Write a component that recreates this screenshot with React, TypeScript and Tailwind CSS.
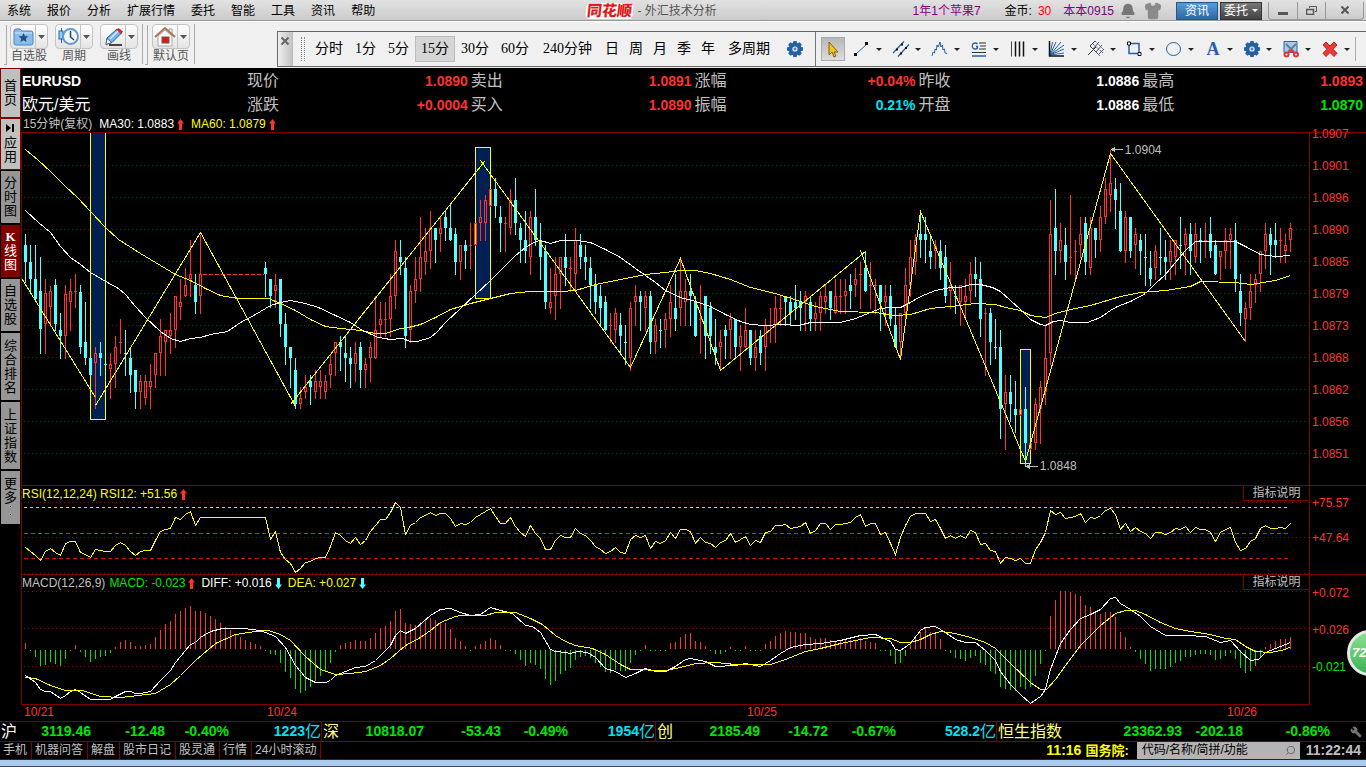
import React from "react";
import { Bell, Shirt, Wrench, Search } from "lucide-react";

type Candle = [kind: "r" | "c", high: number, top: number, bottom: number, low: number];

const STEP = 5;

const FIRST_SESSION: Candle[] = [
  ["c", 234, 245, 262, 282], ["c", 245, 262, 279, 292], ["c", 245, 279, 299, 300], ["c", 257, 291, 329, 353],
  ["r", 279, 293, 324, 353], ["r", 286, 291, 307, 324], ["c", 279, 285, 324, 330], ["c", 313, 330, 336, 358],
  ["r", 285, 294, 336, 358], ["r", 279, 291, 302, 330], ["r", 274, 291, 291, 307], ["c", 285, 292, 347, 353],
  ["c", 302, 342, 358, 364], ["c", 358, 358, 375, 375], ["r", 347, 353, 363, 408], ["c", 342, 353, 358, 375],
  ["c", 364, 364, 364, 364], ["r", 353, 364, 369, 398], ["r", 336, 347, 364, 387], ["r", 319, 342, 342, 353],
  ["c", 330, 353, 353, 375], ["c", 347, 358, 375, 392], ["c", 370, 370, 392, 408], ["r", 375, 381, 392, 408],
  ["r", 375, 381, 398, 404], ["r", 364, 381, 387, 408], ["r", 353, 353, 375, 387], ["r", 319, 336, 353, 375],
  ["r", 330, 330, 342, 375], ["r", 313, 330, 336, 353], ["r", 296, 296, 330, 347], ["r", 279, 302, 307, 319],
  ["r", 268, 285, 296, 296], ["r", 240, 274, 279, 296], ["c", 274, 285, 302, 313], ["r", 235, 274, 296, 313],
];

const SECOND_SESSION: Candle[] = [
  ["c", 262, 268, 274, 296], ["c", 279, 279, 296, 307], ["r", 274, 285, 291, 307], ["c", 279, 279, 324, 336],
  ["c", 313, 324, 347, 364], ["c", 347, 347, 358, 387], ["c", 358, 370, 404, 408], ["r", 387, 398, 404, 408],
  ["r", 375, 387, 392, 398], ["c", 375, 381, 387, 404], ["r", 370, 381, 392, 398], ["r", 370, 381, 387, 398],
  ["r", 375, 381, 392, 398], ["r", 354, 364, 375, 387], ["r", 342, 342, 353, 375], ["c", 336, 342, 347, 370],
  ["c", 336, 353, 358, 381], ["c", 347, 358, 364, 387], ["r", 342, 353, 364, 381], ["c", 342, 347, 370, 387],
  ["r", 358, 364, 370, 387], ["r", 342, 347, 358, 381], ["r", 296, 330, 358, 358], ["r", 302, 319, 325, 336],
  ["r", 302, 319, 319, 336], ["r", 274, 296, 319, 336], ["r", 240, 251, 296, 308], ["c", 240, 257, 262, 274],
  ["c", 257, 268, 336, 347], ["r", 285, 291, 330, 342], ["r", 257, 279, 291, 302], ["r", 217, 257, 279, 291],
  ["r", 228, 251, 262, 274], ["r", 211, 228, 251, 268], ["c", 228, 228, 240, 262], ["r", 217, 228, 234, 251],
  ["c", 211, 217, 228, 240], ["c", 205, 228, 240, 240], ["c", 228, 234, 262, 274], ["r", 245, 245, 262, 279],
  ["c", 240, 245, 251, 268], ["r", 223, 245, 245, 268], ["r", 223, 223, 245, 245], ["r", 200, 217, 223, 240],
  ["r", 195, 200, 223, 240], ["r", 189, 189, 206, 206], ["c", 178, 189, 206, 217], ["c", 206, 217, 223, 251],
  ["r", 217, 223, 223, 251], ["r", 189, 200, 228, 234], ["c", 178, 200, 223, 234], ["c", 223, 228, 240, 262],
  ["c", 211, 240, 251, 262], ["r", 211, 217, 257, 274], ["c", 189, 217, 240, 245], ["c", 223, 240, 257, 279],
  ["c", 245, 251, 302, 308], ["r", 268, 302, 308, 313], ["r", 257, 274, 296, 319], ["r", 257, 257, 274, 308],
  ["c", 234, 257, 268, 285], ["r", 257, 268, 268, 291], ["r", 228, 240, 274, 291], ["c", 234, 245, 257, 268],
  ["c", 245, 257, 262, 279], ["c", 257, 268, 285, 308], ["c", 274, 285, 302, 313], ["c", 285, 296, 308, 325],
  ["c", 296, 302, 330, 330], ["r", 313, 325, 325, 342], ["r", 308, 313, 330, 342], ["c", 313, 325, 336, 353],
  ["c", 325, 342, 342, 364], ["r", 302, 308, 358, 370], ["r", 285, 296, 302, 325], ["c", 291, 296, 302, 330],
  ["r", 291, 296, 308, 330], ["c", 291, 296, 342, 353], ["r", 319, 325, 342, 353], ["c", 319, 330, 330, 347],
  ["r", 313, 319, 330, 347], ["r", 285, 302, 319, 336], ["c", 274, 308, 319, 330], ["r", 258, 291, 308, 325],
  ["r", 279, 291, 302, 325], ["c", 274, 291, 296, 325], ["c", 296, 302, 336, 336], ["r", 285, 319, 319, 353],
  ["c", 296, 296, 336, 358], ["c", 302, 308, 336, 353], ["c", 319, 347, 353, 364], ["r", 330, 342, 347, 370],
  ["c", 325, 330, 336, 358], ["r", 313, 319, 330, 358], ["c", 319, 319, 347, 358], ["r", 325, 336, 347, 370],
  ["r", 308, 330, 347, 347], ["c", 330, 330, 358, 364], ["r", 330, 347, 358, 370], ["c", 330, 336, 353, 364],
  ["r", 319, 325, 347, 370], ["r", 308, 325, 325, 342], ["r", 296, 308, 325, 342], ["r", 296, 308, 308, 325],
  ["c", 296, 296, 302, 325], ["c", 296, 302, 313, 325], ["c", 285, 302, 308, 319], ["c", 291, 302, 308, 330],
  ["r", 291, 296, 302, 330], ["c", 296, 302, 319, 330], ["r", 302, 313, 319, 330], ["r", 291, 296, 313, 330],
  ["r", 285, 296, 302, 313], ["c", 291, 291, 308, 319], ["r", 279, 296, 313, 313], ["r", 279, 296, 296, 313],
  ["r", 279, 291, 296, 313], ["c", 274, 285, 291, 308], ["r", 268, 279, 285, 296], ["r", 262, 274, 274, 308],
  ["c", 251, 268, 291, 291], ["r", 262, 285, 285, 308], ["r", 279, 285, 285, 313], ["c", 285, 285, 302, 330],
  ["r", 285, 296, 302, 325], ["c", 285, 296, 319, 325], ["c", 308, 325, 347, 347], ["r", 313, 313, 342, 358],
  ["r", 268, 285, 313, 325], ["r", 240, 257, 285, 296], ["r", 234, 240, 262, 274], ["c", 212, 234, 240, 257],
  ["c", 217, 234, 240, 262], ["c", 235, 251, 257, 268], ["r", 240, 246, 251, 268], ["c", 240, 251, 268, 279],
  ["c", 245, 257, 296, 302], ["r", 262, 285, 291, 308], ["c", 285, 296, 296, 313], ["r", 285, 285, 302, 325],
  ["r", 279, 296, 302, 319], ["r", 262, 274, 291, 302], ["c", 257, 274, 279, 296], ["c", 262, 279, 319, 336],
  ["r", 308, 313, 313, 375], ["c", 308, 313, 342, 364], ["c", 319, 347, 347, 358], ["c", 330, 347, 409, 438],
  ["r", 375, 392, 404, 449], ["c", 375, 392, 404, 421], ["c", 381, 409, 415, 432], ["r", 409, 409, 415, 415],
  ["c", 387, 409, 443, 466], ["r", 443, 443, 449, 449], ["r", 398, 404, 443, 449], ["r", 381, 387, 409, 443],
  ["r", 325, 358, 392, 404], ["r", 200, 234, 353, 364], ["c", 189, 228, 251, 274], ["r", 223, 240, 251, 262],
  ["c", 228, 245, 262, 279], ["r", 195, 257, 257, 274], ["r", 240, 251, 251, 279], ["r", 217, 234, 245, 257],
  ["c", 217, 223, 262, 274], ["r", 217, 228, 268, 274], ["c", 228, 228, 240, 257], ["r", 206, 217, 240, 251],
  ["r", 178, 189, 217, 223], ["r", 150, 183, 195, 211], ["c", 178, 189, 200, 228], ["c", 183, 211, 251, 251],
  ["r", 211, 217, 251, 262], ["c", 217, 217, 251, 257], ["r", 228, 234, 245, 268], ["c", 234, 240, 251, 274],
  ["c", 234, 257, 257, 285], ["c", 251, 268, 279, 285], ["r", 245, 251, 268, 279], ["c", 228, 257, 257, 274],
  ["c", 240, 257, 262, 279], ["r", 240, 251, 262, 279], ["r", 240, 240, 257, 274], ["c", 217, 245, 245, 268],
  ["r", 228, 234, 245, 274], ["c", 223, 234, 251, 274], ["r", 223, 234, 257, 262], ["c", 228, 240, 240, 262],
  ["r", 223, 240, 240, 257], ["c", 217, 234, 251, 257], ["c", 240, 245, 274, 274], ["r", 251, 251, 257, 279],
  ["r", 228, 240, 251, 268], ["r", 228, 234, 240, 268], ["c", 223, 240, 279, 291], ["c", 274, 291, 313, 325],
  ["r", 302, 308, 319, 341], ["r", 274, 291, 308, 319], ["r", 274, 279, 285, 302], ["r", 251, 251, 274, 291],
  ["r", 223, 234, 251, 268], ["c", 228, 234, 245, 274], ["c", 223, 240, 245, 257], ["r", 228, 240, 240, 262],
  ["r", 234, 245, 251, 262], ["r", 223, 228, 240, 251],
];

const MA60 =
  "25,149 38,160 50,171 65,186 77,197 90,211 105,227 118,239 140,253 160,265 175,274 190,280 205,288 220,295 237,298 268,298 280,303 295,310 310,319 325,326 340,328 360,330 375,333 385,333 400,328 408,327 420,324 435,317 450,309 470,303 490,298 510,293 530,291 545,291 560,291 575,290 595,284 620,279 645,274 665,272 680,270 695,270 710,273 730,279 750,287 775,293 800,301 815,306 840,311 875,312 895,315 910,314 930,308 950,306 975,303 995,304 1005,307 1020,310 1030,315 1045,317 1055,313 1070,309 1090,305 1110,299 1120,296 1140,292 1165,290 1190,286 1200,281 1235,282 1250,284 1275,280 1290,275";
const MA30 =
  "25,210 38,222 50,232 60,246 70,257 80,264 90,272 107,282 118,288 125,294 135,306 145,317 160,331 170,338 180,341 190,338 200,337 210,334 227,331 240,322 255,314 270,305 280,302 290,300 305,303 318,307 335,315 350,322 362,330 378,337 390,339 402,338 410,341 417,341 430,337 437,331 445,322 460,308 475,294 490,280 505,265 515,255 525,247 535,241 540,240 550,243 560,240 577,240 590,242 605,249 620,257 635,268 645,275 655,282 665,290 680,297 695,301 710,306 725,314 740,321 750,324 765,325 780,324 798,325 810,322 840,322 855,318 865,314 880,308 890,307 900,307 910,302 920,296 935,290 950,287 960,287 970,284 980,284 992,287 1000,291 1010,300 1020,309 1030,319 1040,324 1045,325 1053,321 1060,320 1070,322 1087,322 1100,317 1110,310 1117,306 1130,301 1145,293 1155,283 1165,274 1175,262 1185,250 1195,241 1235,241 1245,246 1260,254 1275,256 1290,255";
const ZIGZAG = [
  "20,276 95,397",
  "95,405 200,232 295,406",
  "290,404 484,161",
  "480,160 630,367 680,258 720,370 865,251",
  "860,250 900,359 920,211 1025,461 1110,153 1245,341",
];

const RSI_A = [547, 551, 555, 560, 551, 548, 552, 555, 543, 541, 541, 552, 554, 557, 549, 550, 551, 551, 545, 542, 545, 551, 555, 551, 550, 550, 540, 531, 529, 528, 517, 519, 514, 511, 525, 517];
const RSI_B = [
  517, 539, 531, 552, 559, 563, 572, 568, 562, 561, 558, 557, 557, 546, 532, 535, 540, 543, 537, 544, 540, 531, 525, 519, 519, 512, 502, 507, 534, 525, 522, 517, 515, 512, 515, 513, 513, 518, 526, 523,
  524, 522, 517, 514, 511, 508, 516, 523, 523, 517, 526, 532, 536, 525, 533, 538, 549, 549, 540, 535, 537, 537, 528, 533, 535, 540, 546, 549, 553, 551, 547, 552, 553, 539, 535, 537, 535, 548, 541, 543,
  540, 532, 538, 529, 529, 531, 543, 537, 542, 543, 547, 542, 540, 533, 542, 539, 536, 545, 540, 542, 532, 531, 525, 525, 524, 528, 527, 526, 522, 533, 530, 523, 523, 529, 524, 524, 523, 522, 517, 514,
  526, 523, 523, 534, 532, 543, 554, 537, 525, 516, 513, 513, 513, 521, 519, 528, 538, 535, 538, 535, 538, 530, 532, 544, 543, 550, 551, 563, 557, 558, 560, 558, 563, 563, 549, 542, 532, 510, 514, 512,
  518, 517, 516, 513, 522, 517, 518, 515, 510, 508, 514, 529, 523, 531, 527, 531, 533, 538, 532, 532, 534, 532, 528, 529, 526, 532, 527, 529, 529, 532, 541, 532, 529, 527, 542, 550, 548, 541, 538, 528,
  525, 528, 528, 527, 528, 523,
];
const RSI = RSI_A.map((y, i) => `${25 + i * STEP},${y}`)
  .concat(RSI_B.map((y, i) => `${265 + i * STEP},${y}`))
  .join(" ");

const MACD_BARS = [
  643, 651, 657, 666, 665, 662, 664, 666, 659, 651, 645, 652, 657, 662, 659, 657, 656, 653, 647, 642, 640, 642, 646, 646, 645, 644, 637, 630, 624, 621, 614, 611, 608, 606, 611, 611, 613, 616, 619, 623,
  627, 630, 634, 637, 640, 642, 644, 646, 651, 654, 655, 663, 672, 678, 689, 693, 691, 687, 681, 676, 671, 663, 652, 645, 643, 642, 640, 641, 641, 638, 633, 628, 626, 621, 611, 609, 623, 624, 625, 622,
  620, 618, 620, 622, 623, 629, 638, 641, 646, 651, 646, 644, 641, 638, 640, 645, 651, 651, 654, 660, 666, 663, 665, 669, 679, 685, 681, 674, 671, 668, 660, 657, 656, 658, 663, 667, 672, 673, 670, 671,
  671, 663, 655, 651, 645, 651, 651, 651, 651, 643, 642, 637, 634, 633, 641, 642, 646, 651, 654, 654, 652, 647, 651, 651, 646, 651, 651, 651, 644, 641, 636, 633, 631, 632, 632, 633, 633, 637, 639, 638,
  638, 640, 641, 640, 640, 640, 641, 638, 641, 642, 643, 651, 651, 656, 664, 663, 656, 645, 638, 632, 628, 632, 634, 639, 651, 653, 658, 659, 661, 658, 656, 663, 665, 671, 674, 687, 689, 690, 691, 687,
  689, 687, 676, 664, 651, 616, 600, 591, 591, 592, 594, 596, 605, 607, 613, 614, 612, 612, 617, 632, 637, 647, 652, 659, 664, 671, 669, 669, 669, 667, 663, 661, 657, 657, 655, 654, 654, 655, 660, 659,
  656, 653, 659, 668, 673, 671, 666, 658, 647, 644, 641, 639, 639, 637,
];
const DIFF =
  "25,675 35,682 40,689 45,691 50,691 60,698 65,695 70,691 75,689 80,692 90,699 110,699 115,696 125,691 130,691 135,693 140,693 150,691 160,680 170,670 175,662 190,644 195,642 200,637 210,631 222,628 243,628 260,630 275,636 285,647 295,665 305,677 315,682 325,682 330,680 335,675 345,671 355,667 365,666 375,660 390,645 395,635 400,630 405,633 415,628 430,615 440,609 450,608 455,610 460,612 470,615 480,614 490,607 500,610 512,613 525,625 532,626 540,632 550,649 555,651 565,652 570,653 577,651 587,652 595,657 605,668 615,671 625,677 635,673 645,668 655,671 665,671 675,666 685,659 690,658 705,661 715,666 735,665 745,663 760,666 770,660 780,653 790,647 805,644 820,643 840,640 860,635 875,634 890,641 895,649 900,650 910,643 920,630 925,627 935,626 945,632 955,639 965,642 975,642 985,650 995,660 1000,671 1010,684 1020,694 1030,703 1040,696 1045,689 1050,669 1060,643 1070,629 1080,618 1090,614 1100,609 1110,598 1115,597 1120,603 1130,609 1140,616 1150,626 1165,635 1185,635 1205,636 1220,642 1230,640 1240,651 1250,660 1258,659 1265,652 1275,648 1290,642";
const DEA =
  "25,677 35,678 50,685 65,690 82,690 100,696 120,697 155,693 170,684 180,675 195,660 215,643 235,634 255,631 268,630 280,634 290,640 305,656 320,669 335,674 350,673 365,671 380,665 390,658 405,645 420,637 430,630 440,622 455,616 460,615 485,615 495,612 515,612 530,618 542,624 555,635 565,641 575,645 592,648 605,654 620,664 630,669 665,670 680,667 695,663 715,662 735,664 770,664 785,659 805,651 820,648 840,643 870,637 890,638 900,642 910,642 920,639 930,634 940,631 955,633 970,637 985,642 995,648 1010,663 1030,682 1040,689 1046,689 1055,679 1065,665 1080,645 1100,625 1115,613 1125,610 1135,610 1145,614 1160,622 1175,628 1190,631 1210,634 1225,638 1235,639 1245,646 1255,651 1270,652 1285,649 1290,646";

function Line({ points, color }: { points: string; color: string }) {
  return <polyline points={points} fill="none" stroke={color} strokeWidth="1" transform="translate(.5 .5)" />;
}

function GridLine({ y, color = "#900000", dash = "1 3", end = 1309 }: { y: number; color?: string; dash?: string; end?: number }) {
  return <line x1="24" x2={end} y1={y + 0.5} y2={y + 0.5} stroke={color} strokeDasharray={dash} />;
}

function Candles({ data, from }: { data: Candle[]; from: number }) {
  return (
    <>
      {data.map(([kind, high, top, bottom, low], i) => {
        const x = from + i * STEP;
        const color = kind === "r" ? "#ff3232" : "#54ffff";
        if (kind === "c" || bottom - top < 2) {
          return (
            <g key={x} fill={color}>
              <rect x={x} y={high} width="1" height={low - high + 1} />
              <rect x={x - 1} y={top} width="3" height={Math.max(1, bottom - top)} />
            </g>
          );
        }
        return (
          <g key={x} fill={color}>
            <rect x={x} y={high} width="1" height={top - high + 1} />
            <rect x={x} y={bottom - 1} width="1" height={low - bottom + 2} />
            <rect x={x - 1} y={top} width="1" height={bottom - top} />
            <rect x={x + 1} y={top} width="1" height={bottom - top} />
          </g>
        );
      })}
    </>
  );
}

function Mark({ up = false }: { up?: boolean }) {
  return up ? (
    <svg className="ml-[3px] h-[11px] w-[7px]" viewBox="0 0 7 11" fill="#ff3232">
      <path d="M3.500 0 7 4.500H5V11H2V4.500H0z" />
    </svg>
  ) : (
    <svg className="ml-[3px] h-[11px] w-[7px]" viewBox="0 0 7 11" fill="#54ffff">
      <path d="M3.500 11 0 6.500h2V0h3v6.500h2z" />
    </svg>
  );
}

function Caret({ small = false }: { small?: boolean }) {
  return (
    <svg className={small ? "h-[3px] w-1.5 shrink-0" : "h-1 w-[7px] shrink-0"} viewBox="0 0 7 4" preserveAspectRatio="none" fill="currentColor">
      <path d="M0 0h7L3.500 4z" />
    </svg>
  );
}

function Gear({ className = "" }: { className?: string }) {
  return (
    <svg className={className} viewBox="0 0 18 18">
      <g fill="#2660a4">
        <rect x="7" y="1" width="4" height="16" rx="1" />
        <rect x="7" y="1" width="4" height="16" rx="1" transform="rotate(45 9 9)" />
        <rect x="7" y="1" width="4" height="16" rx="1" transform="rotate(90 9 9)" />
        <rect x="7" y="1" width="4" height="16" rx="1" transform="rotate(135 9 9)" />
        <circle cx="9" cy="9" r="6.500" />
      </g>
      <circle cx="9" cy="9" r="2.600" fill="#f0f0f0" />
      <circle cx="9" cy="9" r="1.400" fill="#4c7fb9" />
    </svg>
  );
}

const MENU = ["系统", "报价", "分析", "扩展行情", "委托", "智能", "工具", "资讯", "帮助"];

function MenuBar() {
  return (
    <header className="flex h-[22px] shrink-0 items-center border-b border-white bg-linear-to-b from-[#e2e2e2] to-[#cacaca] text-xs text-black shadow-[inset_0_-1px_0_#999]">
      <nav className="flex flex-[580] basis-0 gap-4 pl-[7px]">
        {MENU.map((m) => (
          <button key={m} className="whitespace-nowrap">{m}</button>
        ))}
      </nav>
      <div className="flex items-center gap-1 whitespace-nowrap text-[#555]">
        <span className="-skew-x-6 rounded-sm bg-white px-px text-[15px] leading-4 font-black text-[#dd1c22]">同花顺</span>
        <span>- 外汇技术分析</span>
      </div>
      <div className="flex flex-[650] basis-0 items-center justify-end whitespace-nowrap">
        <span className="text-[#800080]">1年1个苹果7</span>
        <span className="ml-6">金币:</span>
        <span className="ml-1.5 text-[#ff0000]">30</span>
        <span className="ml-3 text-[#800080]">本本0915</span>
        <Bell className="ml-1.5 size-4 text-[#777]" fill="#777" />
        <Shirt className="ml-2 size-[18px] text-[#8a8a8a]" fill="#8a8a8a" />
        <button className="ml-3.5 h-[18px] w-[42px] border border-[#24588c] bg-linear-to-b from-[#5a9ad4] to-[#2c68a6] leading-4 text-white">资讯</button>
        <button className="ml-0.5 flex h-[18px] w-[42px] items-center justify-center gap-1 border border-[#333] bg-linear-to-b from-[#777] to-[#444] leading-4 text-white">
          委托<Caret small />
        </button>
        <div className="mr-0.5 ml-1.5 flex h-[18px] rounded-b border border-t-0 border-[#999] text-[#555]">
          <button aria-label="最小化" className="flex w-[29px] items-end justify-center border-r border-[#999] pb-1">
            <svg className="h-[3px] w-2.5"><rect width="10" height="3" fill="#555" /></svg>
          </button>
          <button aria-label="还原" className="flex w-7 items-center justify-center border-r border-[#999]">
            <svg className="h-[9px] w-[11px]" viewBox="0 0 11 9" fill="none" stroke="#555"><path d="M3.500 2V.5h7v5H9" /><path d="M.5 3.500h7v5h-7z" strokeWidth="1.500" /></svg>
          </button>
          <button aria-label="关闭" className="flex w-[37px] items-center justify-center">
            <svg className="size-2" viewBox="0 0 8 8" stroke="#555" strokeWidth="2"><path d="M.5.5l7 7M7.500.5l-7 7" /></svg>
          </button>
        </div>
      </div>
    </header>
  );
}

function ToolButton({ label, children }: { label: string; children: React.ReactNode }) {
  return (
    <button className="flex flex-col items-center text-xs leading-[15px] whitespace-nowrap text-[#555]">
      <span className="flex h-[25px] w-[38px] rounded-sm border border-[#c4c4c4] bg-linear-to-b from-white to-[#e4e4e4]">
        <span className="flex w-[25px] items-center justify-center border-r border-[#c4c4c4]">{children}</span>
        <span className="flex flex-1 items-center justify-center"><Caret /></span>
      </span>
      <span>{label}</span>
    </button>
  );
}

const PERIODS = ["分时", "1分", "5分", "15分", "30分", "60分", "240分钟", "日", "周", "月", "季", "年", "多周期"];

const DRAW_TOOLS: { name: string; icon: React.ReactNode }[] = [
  { name: "线段", icon: <><path d="M3 14 14 4" stroke="#2660a4" /><path d="M1 13h3v3H1zM12 2h3v3h-3z" fill="#111" /></> },
  { name: "通道", icon: <><path d="M1 13 12 1.500M6 16.500 17 4.500" stroke="#2660a4" strokeWidth="1.300" /><path d="M4 8.500h2v2H4zM9 3.500h2v2H9zM8 12.500h2v2H8zM13 7h2v2h-2z" fill="#111" /></> },
  { name: "波浪", icon: <path d="M1 16l1-4 1.500 1 .5-4 1.500 1 .5-5 1 2 1-2 1-3 1 5 1.500-2 .5 5 1.500-1 .5 4 2 .5" stroke="#2660a4" fill="none" /> },
  { name: "黄金分割", icon: <><path d="M9 3h7M10 6h6M9 9h7M2 12.500h14" stroke="#333" /><path d="M2 16h14" stroke="#2660a4" strokeWidth="1.500" /><path d="M7.500 4A3 3 0 1 0 7.500 8V6.500H6" stroke="#2660a4" fill="none" strokeWidth="1.300" /></> },
  { name: "周期线", icon: <><path d="M2.500 1.500v15" stroke="#345" /><path d="M6.500 1.500v15M10.500 1.500v15M14.500 1.500v15" stroke="#111" strokeWidth="1.500" /></> },
  { name: "角度线", icon: <><path d="M2 15 4.500 2M2 15 8 2M2 15 13 2M2 15 16 5M2 15 16 9M2 15 16 13" stroke="#2660a4" /><path d="M1.500 1v15H16" stroke="#111" strokeWidth="1.500" fill="none" /></> },
  { name: "叉线", icon: <><path d="M1 15 9 7M3 6l9 9M3 6l5-5" stroke="#333" /><path d="M6 4l10 9M8 1l9 9M5 8l8 8" stroke="#2660a4" strokeDasharray="2 1" /><path d="M6 9l6-7M9 12l6-7M11 15l6-6" stroke="#555" /></> },
  { name: "矩形", icon: <><path d="M3 3.500h10v10H3z" stroke="#2660a4" strokeWidth="1.500" fill="none" /><path d="M1.500 2h3v3h-3zM12 12.500h3v3h-3z" fill="#fff" stroke="#111" /></> },
  { name: "圆形", icon: <ellipse cx="8.500" cy="9" rx="7" ry="6.500" stroke="#2660a4" fill="none" /> },
];

function Toolbar() {
  return (
    <div className="flex h-[46px] shrink-0 bg-[#f0f0f0] text-black">
      <div className="flex shrink-0 items-start pt-0.5">
        <div className="mt-px ml-1 h-10 w-[3px] border-r border-b border-[#aaa]" />
        <div className="flex gap-[7px] border-r border-[#aaa] pr-1 pl-[3px]">
          <ToolButton label="自选股">
            <svg className="h-[18px] w-[21px]" viewBox="0 0 21 18"><path d="M1 3q0-2 2-2h4l2 2h9q2 0 2 2v10q0 2-2 2H3q-2 0-2-2z" fill="#8cbbea" stroke="#4d83bd" /><path d="M2 5h17" stroke="#d7e9fa" /><path d="m10.500 5 1.400 3 3.400.4-2.500 2.200.7 3.400-3-1.700-3 1.700.7-3.400-2.500-2.200 3.400-.4z" fill="#1f4f86" /></svg>
          </ToolButton>
          <ToolButton label="周期">
            <svg className="h-[19px] w-[21px]" viewBox="0 0 21 19"><path d="M3.500 1v15" stroke="#2660a4" /><rect x="1" y="4" width="4" height="8" fill="#8ad2ff" stroke="#2660a4" /><circle cx="12.500" cy="9.500" r="7.500" fill="#f4f9ff" stroke="#6698ce" strokeWidth="2" /><path d="M12.500 4v6l3.500 3" fill="none" stroke="#246" strokeWidth="1.500" /></svg>
          </ToolButton>
          <ToolButton label="画线">
            <svg className="h-5 w-[21px]" viewBox="0 0 21 20"><path d="M6 18h13" stroke="#444" strokeWidth="2" /><path d="m4 11 10-9 4.500 4L9 15.500l-6 2z" fill="#76b2ee" stroke="#2d5f9d" /><path d="m13 3 2.500-2L20 4.500 18 7z" fill="#d7262b" /><path d="m4 11.500 4.500 4L3 17.500z" fill="#fff" stroke="#345" strokeWidth=".7" /><path d="m7 12 8-8" stroke="#d8edff" strokeWidth="1.500" /></svg>
          </ToolButton>
        </div>
        <div className="mt-px ml-0.5 h-10 w-[3px] border-r border-b border-[#aaa]" />
        <div className="ml-1 flex border-r border-[#aaa] pr-1">
          <ToolButton label="默认页">
            <svg className="h-5 w-[22px]" viewBox="0 0 22 20"><path d="M15 2h3v5h-3z" fill="#fff" stroke="#999" /><path d="M4 9v10h14V9l-7-6z" fill="#fafafa" stroke="#aaa" /><path d="M1 10 11 1l10 9" stroke="#ac7659" strokeWidth="2" fill="none" /><rect x="8" y="10" width="7" height="6" fill="#c9201d" stroke="#874f3c" /></svg>
          </ToolButton>
        </div>
      </div>
      <div className="mt-[9px] ml-[82px] flex h-9 min-w-0 flex-1 items-center border border-r-0 border-[#666]">
        <button aria-label="关闭工具栏" className="flex h-full w-[15px] shrink-0 justify-center border-r border-[#bbb] bg-linear-to-r from-[#eee] to-[#c4c4c4] pt-1">
          <svg className="size-2.5" viewBox="0 0 10 10" stroke="#666" strokeWidth="2"><path d="M1.500 1.500l7 7M8.500 1.500l-7 7" /></svg>
        </button>
        <div className="ml-2 h-6 w-1 shrink-0 border-x border-dotted border-[#888]" />
        <div className="ml-1 flex shrink-0 items-center font-['Liberation_Serif','Noto_Sans_CJK_SC',serif] text-sm leading-6">
          {PERIODS.map((p) => (
            <button
              key={p}
              className={
                p === "15分"
                  ? "h-[26px] border border-[#bbb] bg-[#d6d6d6] px-[5px]"
                  : p.length === 1
                    ? "h-[26px] px-[5px]"
                    : p.length > 2 && !p.endsWith("分")
                      ? "h-[26px] px-2"
                      : "h-[26px] px-1.5"
              }
            >
              {p}
            </button>
          ))}
        </div>
        <button aria-label="周期设置" className="ml-2 flex shrink-0"><Gear className="size-[18px]" /></button>
        <div className="ml-[11px] h-full w-px shrink-0 bg-[#777]" />
        <div className="flex shrink-0 items-center pl-[5px] text-[#222]">
          <button aria-label="选择" className="mr-2 flex size-6 items-center justify-center border border-[#aaa] bg-linear-to-b from-[#b8b8b8] to-[#ddd]">
            <svg className="h-[17px] w-3" viewBox="0 0 12 17"><path d="M2 1v13l3-3 2 5 2-1-2-4h4z" fill="#f1c51b" stroke="#7d6010" /></svg>
          </button>
          {DRAW_TOOLS.map((t) => (
            <button key={t.name} aria-label={t.name} className="flex w-[39px] items-center gap-[5px]">
              <svg className="size-[18px]" viewBox="0 0 18 18" fill="none">{t.icon}</svg>
              <Caret small />
            </button>
          ))}
          <button className="flex w-[39px] items-center gap-[5px]">
            <span className="w-[18px] text-center font-['Liberation_Serif',serif] text-lg leading-6 font-bold text-[#2660a4]">A</span>
            <Caret small />
          </button>
          <button aria-label="画线设置" className="flex w-[39px] items-center gap-[5px]"><Gear className="size-[18px]" /><Caret small /></button>
          <button aria-label="剪切" className="flex w-[39px] items-center gap-[5px]">
            <svg className="size-[18px]" viewBox="0 0 18 18"><path d="M2 1.500h13v11H2z" fill="#a8cbed" stroke="#2660a4" /><path d="m4 4 8 8M14 4l-8 8" stroke="#6f7a84" strokeWidth="2" /><g fill="none" stroke="#d9383a" strokeWidth="2"><circle cx="4.500" cy="14.500" r="2" /><circle cx="14" cy="14.500" r="2" /><path d="m6 13 3.300-3 3.200 3" /></g></svg>
            <Caret small />
          </button>
          <button aria-label="删除" className="flex w-[34px] items-center gap-[5px]">
            <svg className="size-[18px]" viewBox="0 0 18 18"><path d="m5 2 4 4 4-4 3 3-4 4.300 4 4-3 3.200-4-4-4 4-3-3.200 4-4L2 5z" fill="#ee3a36" stroke="#b51e1e" /></svg>
            <Caret small />
          </button>
          <div className="h-6 w-0.5 border-l border-[#aaa]" />
        </div>
      </div>
    </div>
  );
}

const TABS = ["首页", "应用", "分时图", "K线图", "自选股", "综合排名", "上证指数", "更多"];
const TAB_STYLE: Record<string, string> = {
  首页: "h-12 bg-[#c0c0c0] text-black outline outline-[#800000]",
  应用: "h-[50px] bg-[#c0c0c0] text-black outline outline-[#800000]",
  分时图: "h-[52px] bg-[#969696] text-black",
  K线图: "h-[52px] bg-[#800000] text-white",
  自选股: "h-[52px] bg-[#969696] text-black",
  综合排名: "h-[67px] bg-[#969696] text-black",
  上证指数: "h-[67px] bg-[#969696] text-black",
  更多: "h-[53px] bg-[#969696] text-black",
};

function SideTabs() {
  return (
    <nav className="flex w-[21px] shrink-0 flex-col gap-0.5 pt-px pr-px pl-px">
      {TABS.map((t) => (
        <button key={t} className={"flex shrink-0 flex-col items-center justify-center text-[13px] leading-[14px] " + TAB_STYLE[t]}>
          {t === "应用" && (
            <svg className="mb-1 h-2 w-[9px]" viewBox="0 0 9 8"><path d="M0 0l5 4-5 4zM6 0h2v8H6z" /></svg>
          )}
          {[...t].map((ch) => (
            <span key={ch} className={ch === "K" ? "font-['Liberation_Serif',serif] font-bold" : ""}>{ch}</span>
          ))}
          {t === "更多" && (
            <svg className="h-3.5 w-1" viewBox="0 0 4 14"><path d="M1 1h1v1H1zM1 9h1v1H1z" /></svg>
          )}
        </button>
      ))}
    </nav>
  );
}

const QUOTES: [string, string, string][][] = [
  [
    ["现价", "1.0890", "text-[#ff3232]"],
    ["卖出", "1.0891", "text-[#ff3232]"],
    ["涨幅", "+0.04%", "text-[#ff3232]"],
    ["昨收", "1.0886", "text-white"],
    ["最高", "1.0893", "text-[#ff3232]"],
  ],
  [
    ["涨跌", "+0.0004", "text-[#ff3232]"],
    ["买入", "1.0890", "text-[#ff3232]"],
    ["振幅", "0.21%", "text-[#02e2f4]"],
    ["开盘", "1.0886", "text-white"],
    ["最低", "1.0870", "text-[#00e600]"],
  ],
];

function QuoteRow({ title, cells }: { title: React.ReactNode; cells: [string, string, string][] }) {
  return (
    <div className="grid h-6 grid-cols-[226px_repeat(5,minmax(0,1fr))] items-center text-base leading-6 whitespace-nowrap">
      <div className="pl-px text-white">{title}</div>
      {cells.map(([label, value, color]) => (
        <div key={label} className="flex items-center justify-between pr-[3px]">
          <span className="text-[#c0c0c0]">{label}</span>
          <span className={"text-sm leading-6 font-bold " + color}>{value}</span>
        </div>
      ))}
    </div>
  );
}

const PRICES = ["1.0907", "1.0901", "1.0896", "1.0890", "1.0885", "1.0879", "1.0873", "1.0868", "1.0862", "1.0856", "1.0851"];

function Panel({ viewBox, label, drawing, axis, children }: { viewBox: string; label: string; drawing: React.ReactNode; axis: React.ReactNode; children?: React.ReactNode }) {
  return (
    <section className="flex min-h-0 border-t border-[#800000]">
      <div className="relative min-w-0 flex-1 border-x border-[#800000]">
        <svg className="block h-full w-full" viewBox={viewBox} preserveAspectRatio="none" shapeRendering="crispEdges" role="img" aria-label={label}>
          {drawing}
        </svg>
        {children}
      </div>
      <div className="w-14 shrink-0 pl-0.5 text-xs text-[#ff3232]">{axis}</div>
    </section>
  );
}

function HelpButton() {
  return <button className="absolute top-0 right-0 h-[15px] w-[66px] border-b border-l border-[#800000] bg-black text-xs leading-[14px] text-[#c0c0c0]">指标说明</button>;
}

function PriceTag({ price, place }: { price: string; place: string }) {
  return (
    <span className={"absolute flex -translate-y-1/2 items-center text-xs leading-3 text-[#c0c0c0] " + place}>
      <svg className="mr-0.5 h-[5px] w-3" viewBox="0 0 12 5" shapeRendering="crispEdges"><path d="M0 2h12v1H0zM1 1h3v3H1zM3 0h1v5H3z" fill="#c0c0c0" /></svg>
      {price}
    </span>
  );
}

function Charts() {
  return (
    <div className="grid min-h-0 flex-1 grid-rows-[minmax(0,353fr)_minmax(0,89fr)_minmax(0,130fr)]">
      <Panel
        viewBox="22 133 1287 352"
        label="EURUSD 15分钟K线"
        drawing={
          <>
            {[165, 197, 229, 261, 293, 325, 357, 389, 421, 453].map((y) => <GridLine key={y} y={y} />)}
            <g fill="#001f52" stroke="#ffff00">
              <rect x="90.500" y="130.500" width="15" height="289" />
              <rect x="475.500" y="147.500" width="15" height="151" />
              <rect x="1020.500" y="349.500" width="10" height="114" />
            </g>
            <line x1="203" x2="264" y1="274.500" y2="274.500" stroke="#ff3232" strokeDasharray="4 2" />
            <Candles data={FIRST_SESSION} from={25} />
            <Candles data={SECOND_SESSION} from={265} />
            <Line points={MA60} color="#ffff00" />
            <Line points={MA30} color="#ffffff" />
            {ZIGZAG.map((z) => <Line key={z} points={z} color="#ffff00" />)}
          </>
        }
        axis={
          <ul className="-mt-[15px] flex h-full flex-col">
            {PRICES.map((p) => <li key={p} className="flex h-[9.09%] shrink-0 items-center">{p}</li>)}
          </ul>
        }
      >
        <PriceTag price="1.0904" place="top-[4.7%] left-[84.6%]" />
        <PriceTag price="1.0848" place="top-[94.7%] left-[78%]" />
      </Panel>
      <Panel
        viewBox="22 486 1287 88"
        label="RSI"
        drawing={
          <>
            {[502, 537, 573].map((y) => <GridLine key={y} y={y} />)}
            <GridLine y={507} color="#54ffff" dash="3 3" end={1289} />
            <GridLine y={533} color="#0a8a4a" dash="4 3" end={1289} />
            <GridLine y={558} color="#d01010" dash="4 3" end={1289} />
            <Line points={RSI} color="#ffff00" />
          </>
        }
        axis={
          <ul>
            <li className="leading-[35px]">+75.57</li>
            <li className="leading-[35px]">+47.64</li>
          </ul>
        }
      >
        <p className="absolute top-0 left-0 flex items-center text-xs leading-4 text-[#ffff00]">RSI(12,12,24) RSI12: +51.56<Mark up /></p>
        <HelpButton />
      </Panel>
      <Panel
        viewBox="22 575 1287 129"
        label="MACD"
        drawing={
          <>
            {[591, 628, 666].map((y) => <GridLine key={y} y={y} />)}
            {MACD_BARS.map((y, i) =>
              y < 650 ? (
                <rect key={i} x={25 + i * STEP} y={y} width="1" height={649 - y} fill="#ff3232" />
              ) : (
                <rect key={i} x={25 + i * STEP} y="650" width="1" height={y - 650} fill="#00e600" />
              ),
            )}
            <Line points={DIFF} color="#ffffff" />
            <Line points={DEA} color="#ffff00" />
          </>
        }
        axis={
          <ul>
            <li className="leading-[37px]">+0.072</li>
            <li className="leading-[37px]">+0.026</li>
            <li className="leading-[37px] text-[#00e600]">-0.021</li>
          </ul>
        }
      >
        <p className="absolute top-0 left-0 flex items-center gap-1.5 text-xs leading-4 whitespace-nowrap">
          <span className="flex items-center gap-1 text-[#c0c0c0]">
            MACD(12,26,9)
            <span className="flex items-center text-[#00e600]">MACD: -0.023<Mark up /></span>
          </span>
          <span className="flex items-center text-white">DIFF: +0.016<Mark /></span>
          <span className="flex items-center text-[#ffff00]">DEA: +0.027<Mark /></span>
        </p>
        <HelpButton />
      </Panel>
    </div>
  );
}

const GREEN = "text-right text-[#00e600]";
const INDICES: { name: string; tone: string; values: string[]; volume?: string }[] = [
  { name: "沪", tone: "text-white", values: ["3119.46", "-12.48", "-0.40%"], volume: "1223" },
  { name: "深", tone: "text-[#ffff80]", values: ["10818.07", "-53.43", "-0.49%"], volume: "1954" },
  { name: "创", tone: "text-[#ffff80]", values: ["2185.49", "-14.72", "-0.67%"], volume: "528.2" },
  { name: "恒生指数", tone: "text-[#ffff80]", values: ["23362.93", "-202.18", "-0.86%"] },
];

function Ticker() {
  return (
    <div className="grid h-5 shrink-0 grid-cols-[91fr_74fr_64fr_93fr_102fr_77fr_67fr_88fr_104fr_68fr_68fr_101fr_185fr_61fr_87fr_36fr] items-center border-t border-[#800000] text-sm leading-[19px] font-bold whitespace-nowrap">
      {INDICES.map((ix) => (
        <React.Fragment key={ix.name}>
          <div className="flex items-center justify-between pl-px">
            <span className={"text-base leading-[19px] font-normal " + ix.tone}>{ix.name}</span>
            <span className="text-[#00e600]">{ix.values[0]}</span>
          </div>
          <span className={GREEN}>{ix.values[1]}</span>
          <span className={GREEN}>{ix.values[2]}</span>
          {ix.volume ? (
            <span className="flex items-center justify-end border-r border-[#800000] text-[#02e2f4]">
              {ix.volume}
              <span className="text-base leading-[19px] font-normal">亿</span>
            </span>
          ) : (
            <Wrench className="mr-1 size-3 -scale-x-100 justify-self-end text-[#777]" fill="#777" />
          )}
        </React.Fragment>
      ))}
    </div>
  );
}

const LINKS = ["手机", "机器问答", "解盘", "股市日记", "股灵通", "行情", "24小时滚动"];

function StatusBar() {
  return (
    <footer className="flex h-[19px] shrink-0 items-center border-y border-[#800000] text-xs leading-[17px] whitespace-nowrap">
      {LINKS.map((l) => (
        <a key={l} href="#" className="border-r border-[#800000] pr-1 pl-[3px] text-[#c0c0c0]">{l}</a>
      ))}
      <span className="ml-auto text-sm leading-[17px] font-bold text-[#ffff00]">11:16</span>
      <span className="ml-1 text-[13px] leading-[17px] font-bold text-[#ffff00]">国务院:</span>
      <label className="ml-2 flex h-[17px] w-[163px] items-center bg-[#b4b4b4] pr-1 pl-[5px]">
        <span className="sr-only">搜索</span>
        <input className="h-[17px] w-0 min-w-0 flex-1 bg-transparent text-xs leading-[17px] text-black outline-none" defaultValue="代码/名称/简拼/功能" />
        <Search className="size-[11px] -scale-x-100 text-[#666]" />
      </label>
      <time className="mr-[5px] ml-1.5 text-sm leading-[17px] font-bold text-[#c0c0c0]">11:22:44</time>
    </footer>
  );
}

export default function App() {
  return (
    <div className="relative flex h-screen min-h-[640px] flex-col overflow-hidden bg-black font-['Liberation_Sans','Noto_Sans_CJK_SC',sans-serif]">
      <MenuBar />
      <Toolbar />
      <main className="flex min-h-0 flex-1">
        <SideTabs />
        <div className="flex min-w-0 flex-1 flex-col">
          <div className="pt-px">
            <QuoteRow title={<span className="text-sm leading-6 font-bold">EURUSD</span>} cells={QUOTES[0]} />
            <QuoteRow title="欧元/美元" cells={QUOTES[1]} />
          </div>
          <p className="flex h-[15px] items-center gap-[7px] pl-0.5 text-xs leading-[15px] whitespace-nowrap">
            <span className="text-[#c0c0c0]">15分钟(复权)</span>
            <span className="flex items-center text-white">MA30: 1.0883<Mark up /></span>
            <span className="flex items-center text-[#ffff00]">MA60: 1.0879<Mark up /></span>
          </p>
          <Charts />
          <div className="grid h-[17px] grid-cols-[243fr_480fr_480fr_139fr] pl-[3px] text-xs leading-[15px] text-[#ff3232]">
            {["10/21", "10/24", "10/25", "10/26"].map((d, i) => (
              <span key={d} className={i === 0 ? "-ml-[3px] border-t border-[#800000] pl-[3px]" : i === 3 ? "mr-[56px] border-t border-[#800000]" : "border-t border-[#800000]"}>{d}</span>
            ))}
          </div>
        </div>
      </main>
      <Ticker />
      <StatusBar />
      <div className="h-[7px] shrink-0 border-b border-[#445] bg-[#a8cbee]" />
      <div className="absolute -right-[27px] bottom-[91px] flex size-[46px] items-center rounded-full border-3 border-[#e8e8e8] bg-linear-to-b from-[#8be08f] to-[#36b455] pl-0.5 text-[13px] font-bold text-white italic">72</div>
    </div>
  );
}
